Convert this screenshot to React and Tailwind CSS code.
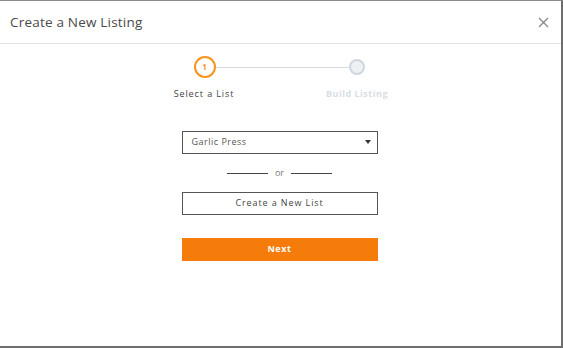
import React from 'react';

const App = () => {
  return (
    <div className="w-[563px] h-[348px] bg-white border-t border-t-[#8c8c8c] border-r-2 border-r-[#6e6e6e] border-b-2 border-b-[#6e6e6e] flex flex-col" style={{ fontFamily: '"Open Sans", "Liberation Sans", sans-serif' }}>
      {/* Header */}
      <div className="h-[43px] flex items-center justify-between pl-[10px] pr-[12px] border-b border-[#e3e3e3]">
        <h1 className="text-[13.5px] text-[#4a4a4a] tracking-[0.2px]">Create a New Listing</h1>
        <button className="text-[#888] leading-none">
          <svg width="11" height="11" viewBox="0 0 11 11" fill="none" stroke="currentColor" strokeWidth="1.3">
            <path d="M1 1L10 10M10 1L1 10" />
          </svg>
        </button>
      </div>

      {/* Stepper */}
      <div className="flex justify-center pt-[12px]">
        <div className="flex flex-col w-[306px]">
          <div className="flex items-center pl-[66px] pr-[69px]">
            <div className="w-[22px] h-[22px] rounded-full border-2 border-[#f7941d] bg-white flex items-center justify-center text-[8px] font-bold text-[#f7941d]">1</div>
            <div className="flex-1 h-px bg-[#d5dbe1]" />
            <div className="w-[16px] h-[16px] rounded-full border-2 border-[#cfd6dd] bg-[#eef1f4]" />
          </div>
          <div className="flex mt-[9px]">
            <span className="w-[153px] text-center text-[9px] text-[#444] tracking-[0.9px]">Select a List</span>
            <span className="w-[153px] text-center text-[9px] font-bold text-[#d8dee4] tracking-[0.5px]">Build Listing</span>
          </div>
        </div>
      </div>

      {/* Form */}
      <div className="flex flex-col items-center mt-[30px] pr-[2px]">
        <div className="w-[196px] h-[23px] border border-[#555] flex items-center justify-between pl-[9px] pr-[6px]">
          <span className="text-[9px] text-[#555] tracking-[0.5px]">Garlic Press</span>
          <svg width="6" height="4" viewBox="0 0 6 4"><path d="M0 0H6L3 4Z" fill="#333" /></svg>
        </div>

        <div className="flex items-center gap-[7px] mt-[16px]">
          <div className="w-[41px] h-px bg-[#444]" />
          <span className="text-[9px] text-[#777] leading-none -mt-[2px]">or</span>
          <div className="w-[41px] h-px bg-[#444]" />
        </div>

        <button className="w-[196px] h-[23px] mt-[15px] border border-[#555] bg-white text-[9px] text-[#444] tracking-[0.9px]">
          Create a New List
        </button>

        <button className="w-[196px] h-[23px] mt-[23px] bg-[#f57c0a] text-[9px] font-bold text-white tracking-[0.6px]">
          Next
        </button>
      </div>
    </div>
  );
};

export default App;
